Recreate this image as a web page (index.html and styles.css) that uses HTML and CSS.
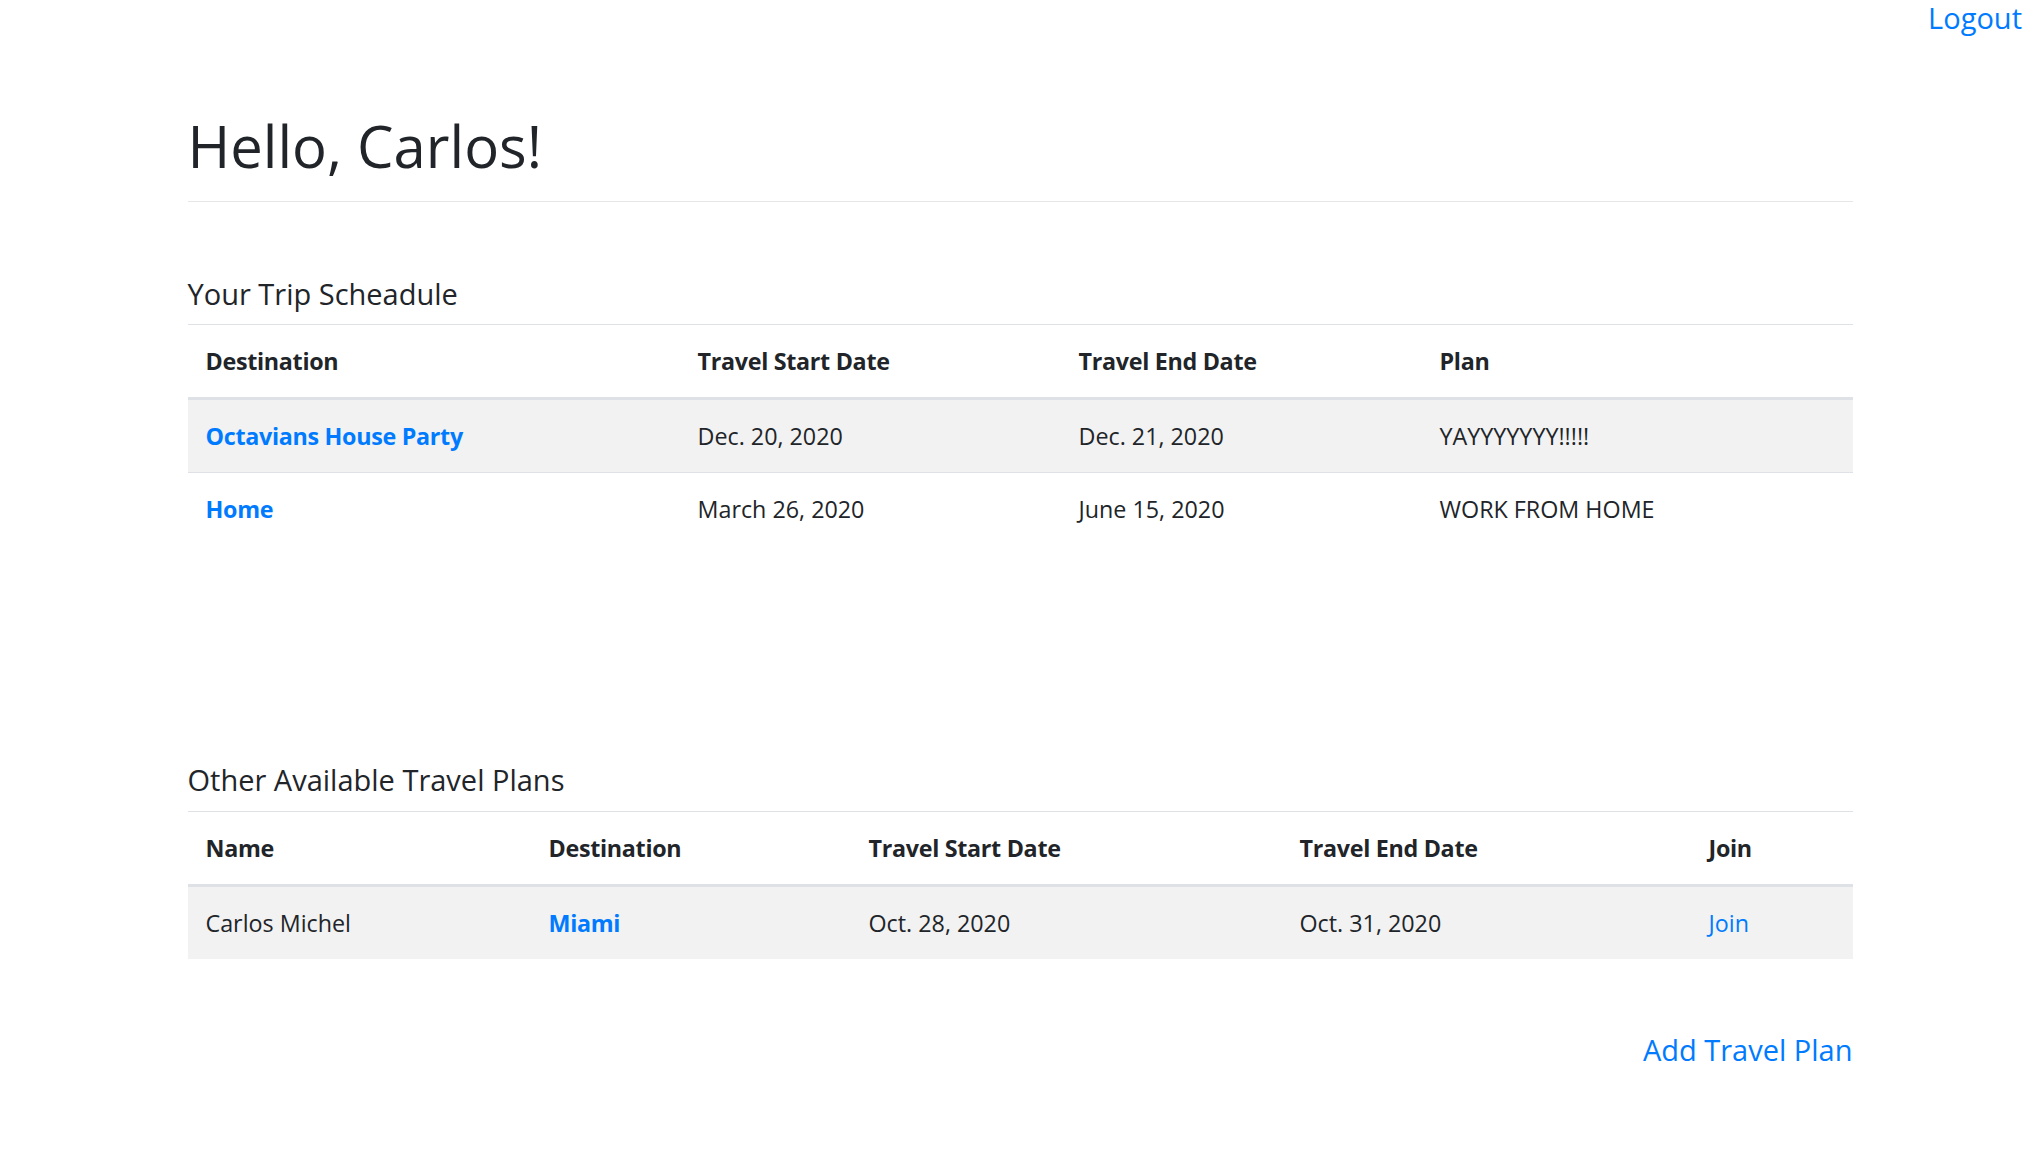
FILE: index.html
```html
<!DOCTYPE html>
<html lang="en">
<head>
<meta charset="utf-8">
<title>Travel Dashboard</title>
<link rel="stylesheet" href="styles.css">
</head>
<body>
<nav class="topbar"><a class="logout" href="#">Logout</a></nav>
<main class="container">
  <h1 class="greeting">Hello, Carlos!</h1>
  <hr class="divider">

  <h5 class="section-title first">Your Trip Scheadule</h5>
  <table class="table striped trips">
    <colgroup>
      <col class="c-dest"><col class="c-start"><col class="c-end"><col class="c-plan">
    </colgroup>
    <thead>
      <tr><th>Destination</th><th>Travel Start Date</th><th>Travel End Date</th><th>Plan</th></tr>
    </thead>
    <tbody>
      <tr><td><a class="strong-link" href="#">Octavians House Party</a></td><td>Dec. 20, 2020</td><td>Dec. 21, 2020</td><td>YAYYYYYYY!!!!!</td></tr>
      <tr><td><a class="strong-link" href="#">Home</a></td><td>March 26, 2020</td><td>June 15, 2020</td><td>WORK FROM HOME</td></tr>
    </tbody>
  </table>

  <h5 class="section-title second">Other Available Travel Plans</h5>
  <table class="table striped others">
    <colgroup>
      <col class="o-name"><col class="o-dest"><col class="o-start"><col class="o-end"><col class="o-join">
    </colgroup>
    <thead>
      <tr><th>Name</th><th>Destination</th><th>Travel Start Date</th><th>Travel End Date</th><th>Join</th></tr>
    </thead>
    <tbody>
      <tr><td>Carlos Michel</td><td><a class="strong-link" href="#">Miami</a></td><td>Oct. 28, 2020</td><td>Oct. 31, 2020</td><td><a class="plain-link" href="#">Join</a></td></tr>
    </tbody>
  </table>

  <div class="actions"><a class="add-plan" href="#">Add Travel Plan</a></div>
</main>
</body>
</html>
```
FILE: styles.css
```css
html, body {
  margin: 0;
  padding: 0;
  background: #fff;
}
body {
  font-family: "Open Sans", "Noto Sans", sans-serif;
  font-size: 23.3px;
  line-height: 36px;
  color: #212529;
}
a {
  color: #007bff;
  text-decoration: none;
}

.topbar {
  display: flex;
  justify-content: flex-end;
  padding-right: 21px;
  height: 36px;
}
.logout {
  font-size: 29px;
  line-height: 36px;
}

.container {
  width: 1665px;
  margin: 0 0 0 calc(50% - 834px);
}

.greeting {
  margin: 74.5px 0 0;
  font-size: 58px;
  line-height: 70px;
  font-weight: 400;
}
.divider {
  margin: 20.5px 0 0;
  border: 0;
  border-top: 1.5px solid #e6e6e6;
  height: 0;
}

.section-title {
  font-size: 29px;
  line-height: 35px;
  font-weight: 400;
  margin: 0 0 13px;
}
.section-title.first { margin-top: 74px; }
.section-title.second { margin-top: 217px; margin-bottom: 14px; }

.table {
  width: 100%;
  border-collapse: collapse;
  table-layout: fixed;
}
.table th,
.table td {
  padding: 18px;
  text-align: left;
  vertical-align: top;
  border-top: 1.5px solid #dee2e6;
  white-space: nowrap;
}
.table th {
  font-weight: 700;
  letter-spacing: -0.3px;
}
.table thead th {
  border-bottom: 3px solid #dee2e6;
}
.table tbody tr:first-child td { border-top: 0; }
.striped tbody tr:nth-child(odd) {
  background: #f2f2f2;
}

.strong-link {
  font-weight: 700;
  letter-spacing: -0.3px;
}

.c-dest { width: 492px; }
.c-start { width: 381px; }
.c-end { width: 361px; }
.c-plan { width: 431px; }

.o-name { width: 343px; }
.o-dest { width: 320px; }
.o-start { width: 431px; }
.o-end { width: 409px; }
.o-join { width: 162px; }

.actions {
  display: flex;
  justify-content: flex-end;
  margin-top: 73px;
}
.add-plan {
  font-size: 29px;
  line-height: 35px;
}
```
